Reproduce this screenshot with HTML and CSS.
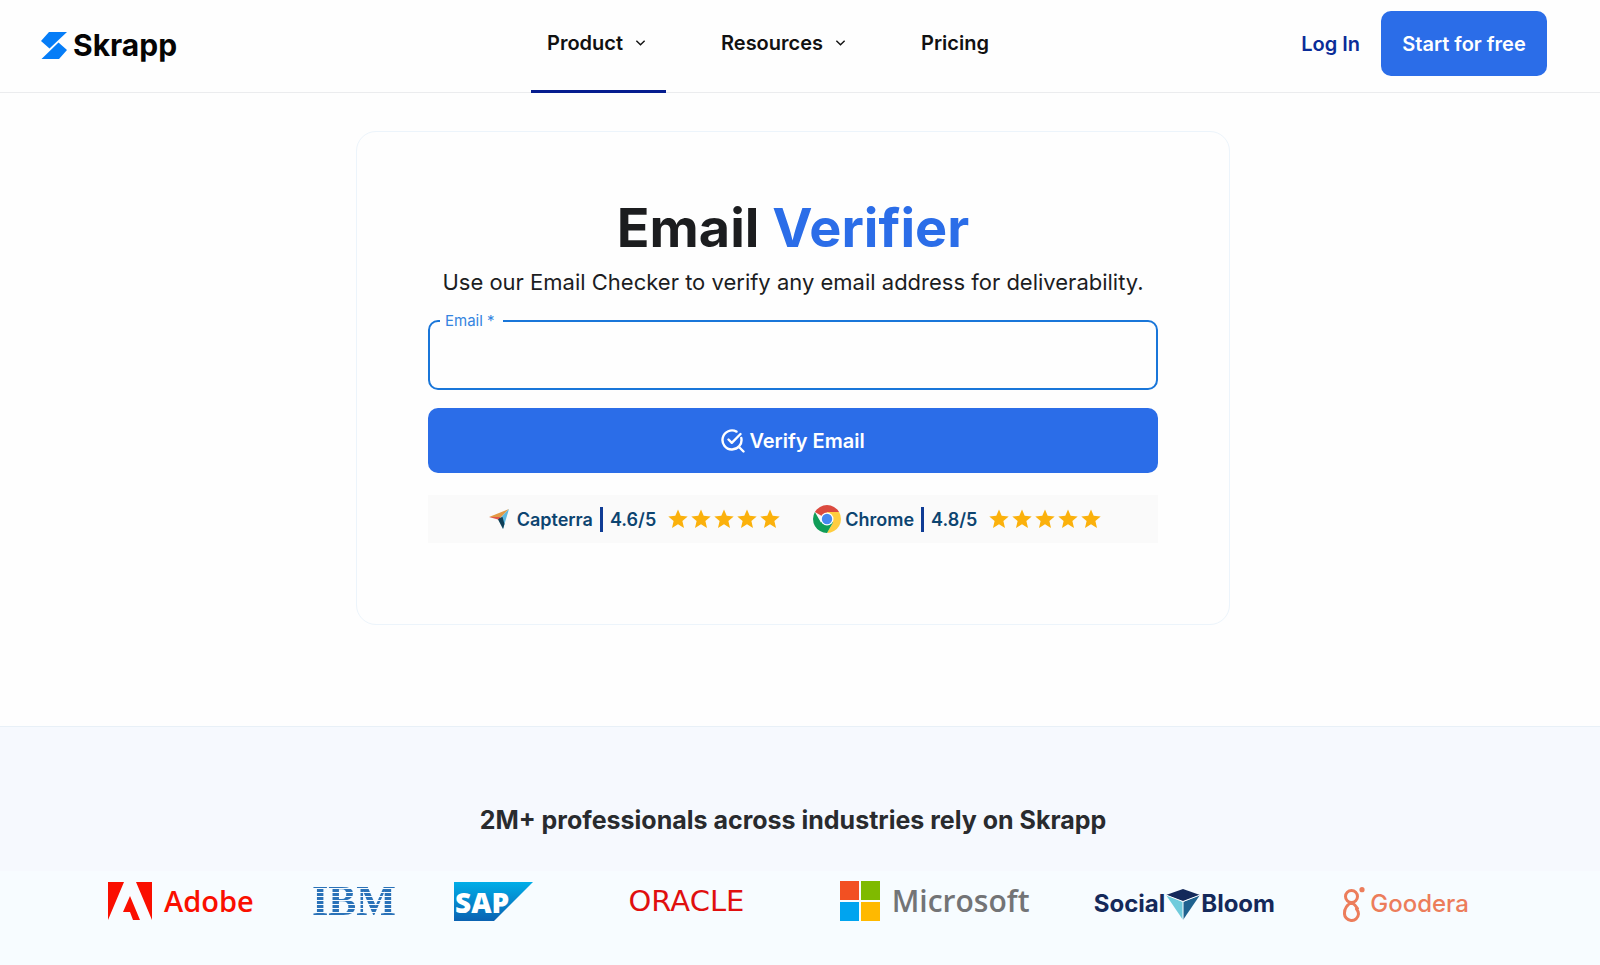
FILE: index.html
```html
<!DOCTYPE html>
<html lang="en">
<head>
<meta charset="utf-8">
<meta name="viewport" content="width=device-width, initial-scale=1">
<title>Email Verifier - Skrapp</title>
<link rel="stylesheet" href="styles.css">
</head>
<body>
<svg class="defs" aria-hidden="true">
  <symbol id="star" viewBox="0 0 20 20"><path fill="#fbb10c" d="M10 .5l2.700 6.300 7 .7-5.300 4.600 1.600 6.900L10 15.300 4 19l1.600-6.900L.3 7.500l7-.7z"/></symbol>
  <symbol id="chevron" viewBox="0 0 12 8"><path fill="none" stroke="#111" stroke-width="1.500" d="M1.500 1.500 6 6l4.500-4.500"/></symbol>
</svg>
<header class="header">
  <div class="brand-cell">
    <a class="brand" href="#">
      <svg class="brand-mark" viewBox="0 0 26 27" aria-hidden="true"><path fill="#067df7" d="M8 0h18L8.500 16.500 0 9zM17.500 10.500 26 18l-8 9H.5z"/></svg>
      <span>Skrapp</span>
    </a>
  </div>
  <nav class="nav">
    <a class="nav-link active" href="#">Product <svg class="chevron" aria-hidden="true"><use href="#chevron"/></svg></a>
    <a class="nav-link" href="#">Resources <svg class="chevron" aria-hidden="true"><use href="#chevron"/></svg></a>
    <a class="nav-link" href="#">Pricing</a>
  </nav>
  <div class="actions">
    <a class="login" href="#">Log In</a>
    <button class="btn start" type="button">Start for free</button>
  </div>
</header>
<main>
  <section class="hero">
    <form class="card">
      <h1 class="title">Email <span class="accent">Verifier</span></h1>
      <p class="subtitle">Use our Email Checker to verify any email address for deliverability.</p>
      <div class="field">
        <label class="field-label" for="email">Email *</label>
        <input class="field-input" id="email" type="email" required>
      </div>
      <button class="btn verify" type="submit">
        <svg class="verify-icon" viewBox="0 0 24 24" fill="none" stroke="#fff" stroke-width="2.400" stroke-linecap="round" stroke-linejoin="round" aria-hidden="true"><path d="M15.500 2.600A9.500 9.500 0 1 0 20.300 9M17.500 17.500l5 5M7.500 10.500l3.300 3.300L19.500 5"/></svg>
        Verify Email
      </button>
      <div class="ratings">
        <div class="rating">
          <svg class="capterra" viewBox="0 0 20 20" aria-hidden="true"><path fill="#e39a45" d="M0 8l12 .2L20 0z"/><path fill="#5fb9e0" d="M12 8.200 20 0l-6 20z"/><path fill="#0f4058" d="M8.500 9.500l5-1.500 2 7L14 20z"/><path fill="#e0574a" d="M0 8l12 0-3 2.500z"/></svg>
          <span class="source">Capterra</span>
          <span class="score">4.6/5</span>
          <span class="stars" role="img" aria-label="4.6 out of 5 stars"><svg><use href="#star"/></svg><svg><use href="#star"/></svg><svg><use href="#star"/></svg><svg><use href="#star"/></svg><svg><use href="#star"/></svg></span>
        </div>
        <div class="rating">
          <svg class="chrome" viewBox="0 0 28 28" aria-hidden="true"><path fill="#db4a3f" d="M14 14 1.900 7A14 14 0 0 1 26.100 7z"/><path fill="#ffcd40" d="M14 14V7h12.100A14 14 0 0 1 14 28l6-10.500z"/><path fill="#109d58" d="M14 14 7.900 17.500 1.900 7A14 14 0 0 0 14 28l6-10.500z"/><circle cx="14" cy="14" r="6.500" fill="#fff"/><circle cx="14" cy="14" r="5.200" fill="#4688f1"/></svg>
          <span class="source">Chrome</span>
          <span class="score">4.8/5</span>
          <span class="stars" role="img" aria-label="4.8 out of 5 stars"><svg><use href="#star"/></svg><svg><use href="#star"/></svg><svg><use href="#star"/></svg><svg><use href="#star"/></svg><svg><use href="#star"/></svg></span>
        </div>
      </div>
    </form>
  </section>
  <section class="trust">
    <h2 class="trust-title">2M+ professionals across industries rely on Skrapp</h2>
    <ul class="logos">
      <li class="logo adobe"><svg class="adobe-mark" viewBox="0 0 44 38" aria-hidden="true"><path fill="#fa0f00" d="M0 0h16L0 38zM28 0h16v38zM22 14l10 24h-7l-3-8h-7z"/></svg><span>Adobe</span></li>
      <li class="logo ibm"><span>IBM</span></li>
      <li class="logo"><svg class="sap" viewBox="0 0 79 39" role="img" aria-label="SAP"><defs><linearGradient id="sap-fill" x1="0" y1="0" x2="0" y2="1"><stop offset="0" stop-color="#00aee8"/><stop offset="1" stop-color="#0b62b2"/></linearGradient></defs><path fill="url(#sap-fill)" d="M0 0h79L40 39H0z"/><text class="sap-text" x="1" y="31">SAP</text></svg></li>
      <li class="logo oracle">ORACLE</li>
      <li class="logo microsoft"><svg class="ms-mark" viewBox="0 0 40 40" aria-hidden="true"><path fill="#f25022" d="M0 0h19v19H0z"/><path fill="#7fba00" d="M21 0h19v19H21z"/><path fill="#00a4ef" d="M0 21h19v19H0z"/><path fill="#ffb900" d="M21 21h19v19H21z"/></svg><span>Microsoft</span></li>
      <li class="logo low bloom"><span>Social</span><svg class="bloom-mark" viewBox="0 0 34 31" aria-hidden="true"><path fill="#6fcbdc" d="M0 6l17 7v18z"/><path fill="#1f628f" d="M34 6l-17 7v18z"/><path fill="#14295a" d="M17 0l17 6-17 6.500L0 6z"/><path fill="none" stroke="#fff" d="M0 6l17 6.500L34 6M17 12.500V31"/></svg><span>Bloom</span></li>
      <li class="logo low goodera"><svg class="goodera-mark" viewBox="0 0 22 35" fill="none" stroke="#ec7d5b" stroke-width="3" stroke-linecap="round" aria-hidden="true"><circle cx="8.500" cy="9.500" r="6"/><path d="M8.500 15.500C4 18 1.500 21 1.500 26a7 7 0 0 0 14 1c0-2-.7-3.500-2-5M8.500 15.500c2 1 4 3 6 6"/><circle cx="19" cy="2.700" r="2.600" fill="#ec7d5b" stroke="none"/></svg><span>Goodera</span></li>
    </ul>
  </section>
</main>
</body>
</html>
```
FILE: styles.css
```css
* { box-sizing: border-box; }

body {
  margin: 0;
  min-height: 100vh;
  display: flex;
  flex-direction: column;
  background: #fefefe;
  color: #1c1d1f;
  font-family: Inter, "Liberation Sans", sans-serif;
}

a { color: inherit; text-decoration: none; }

.defs { position: absolute; width: 0; height: 0; }

.header {
  display: flex;
  height: 93px;
  padding: 0 53px 0 41px;
  border-bottom: 1px solid #ebecee;
}

.brand-cell { flex: 0 0 490px; display: flex; align-items: center; padding-bottom: 2px; }
.brand {
  display: flex;
  align-items: center;
  gap: 6px;
  color: #050505;
  font-size: 30px;
  line-height: 36px;
  font-weight: 700;
}
.brand-mark { width: 26px; height: 27px; }

.nav { display: flex; gap: 39px; flex: 1; }
.nav-link {
  display: flex;
  align-items: center;
  gap: 12px;
  margin-bottom: -1px;
  padding: 0 20px 4px 16px;
  border-bottom: 3px solid transparent;
  color: #111;
  font-size: 20px;
  font-weight: 600;
}
.nav-link.active { border-bottom-color: #061d8f; }
.chevron { width: 11px; height: 8px; }

.actions { display: flex; align-items: center; gap: 21px; padding-bottom: 5px; }
.login { color: #0a2c98; font-size: 20px; font-weight: 600; }

.btn {
  display: flex;
  align-items: center;
  justify-content: center;
  gap: 4px;
  height: 65px;
  border: 0;
  border-radius: 10px;
  background: #2b6de8;
  color: #fff;
  font-family: inherit;
  font-size: 20px;
  font-weight: 600;
  cursor: pointer;
}
.start { min-width: 166px; padding: 0 12px; }

main { flex: 1; display: flex; flex-direction: column; }

.hero { padding: 38px 14px 101px 0; }
.card {
  max-width: 874px;
  margin: 0 auto;
  padding: 61px 71px 81px;
  border: 1px solid #ecf4fb;
  border-radius: 20px;
}
.title {
  margin: 0;
  font-size: 54px;
  line-height: 70px;
  font-weight: 700;
  text-align: center;
}
.accent { color: #2b6de8; }
.subtitle {
  margin: 3px 0 22px;
  font-size: 22px;
  line-height: 32px;
  text-align: center;
}

.field { position: relative; }
.field-label {
  position: absolute;
  top: -8px;
  left: 12px;
  padding: 0 8px 0 5px;
  background: #fefefe;
  color: #3484e0;
  font-size: 15px;
  line-height: 18px;
}
.field-input {
  display: block;
  width: 100%;
  height: 70px;
  padding: 0 16px;
  border: 2px solid #1976d9;
  border-radius: 10px;
  background: transparent;
  font: inherit;
  font-size: 20px;
  outline: 0;
}

.verify { width: 100%; margin-top: 18px; }
.verify-icon { width: 24px; height: 24px; }

.ratings {
  display: flex;
  justify-content: center;
  gap: 33px;
  margin-top: 22px;
  padding-left: 4px;
  background: #fafafa;
}
.rating {
  display: flex;
  align-items: center;
  height: 48px;
  color: #0c4470;
  font-size: 18px;
  font-weight: 600;
}
.capterra { width: 20px; height: 20px; margin-right: 8px; }
.chrome { width: 28px; height: 28px; margin-right: 4px; }
.score {
  margin-left: 7px;
  padding-left: 7px;
  border-left: 3px solid #0f3c95;
  line-height: 25px;
}
.stars { display: flex; gap: 3px; margin-left: 12px; }
.stars svg { width: 20px; height: 20px; }

.trust {
  flex: 1;
  padding: 75px 14px 30px 0;
  border-top: 1px solid #e8f0f7;
  background: linear-gradient(#f6f9fe 144px, #f7fcff 144px);
}
.trust-title {
  margin: 0;
  color: #292b2e;
  font-size: 25px;
  line-height: 36px;
  font-weight: 700;
  text-align: center;
}
.logos {
  display: flex;
  justify-content: space-between;
  align-items: center;
  margin: 36px 0 0;
  padding: 0 117px 0 108px;
  list-style: none;
}
.logo { display: flex; align-items: center; height: 48px; line-height: 48px; }
.logo.low { height: 54px; padding-top: 6px; }

.adobe { gap: 12px; color: #fa0f00; font-family: "Open Sans", sans-serif; font-size: 29px; font-weight: 600; }
.adobe-mark { width: 44px; height: 38px; }

.ibm { font-family: "Liberation Serif", serif; font-size: 42px; font-weight: 700; }
.ibm span {
  background: repeating-linear-gradient(#2a72b8 0 3px, transparent 3px 4px);
  background-clip: text;
  color: transparent;
}

.sap { width: 79px; height: 39px; }
.sap-text { fill: #fff; font-family: "Open Sans", sans-serif; font-size: 28px; font-weight: 800; }

.oracle {
  justify-content: center;
  min-width: 130px;
  margin: 0 30px;
  color: #e00f0f;
  font-family: "DejaVu Sans", sans-serif;
  font-size: 29px;
}

.microsoft { gap: 12px; margin-right: 6px; color: #737476; font-family: "Open Sans", sans-serif; font-size: 30px; font-weight: 600; }
.ms-mark { width: 40px; height: 40px; }

.bloom { gap: 1px; color: #14295a; font-size: 24px; font-weight: 700; }
.bloom-mark { width: 34px; height: 31px; }

.goodera { gap: 5px; margin-left: 10px; color: #ec7d5b; font-size: 24px; font-weight: 500; }
.goodera-mark { width: 22px; height: 35px; }
```
